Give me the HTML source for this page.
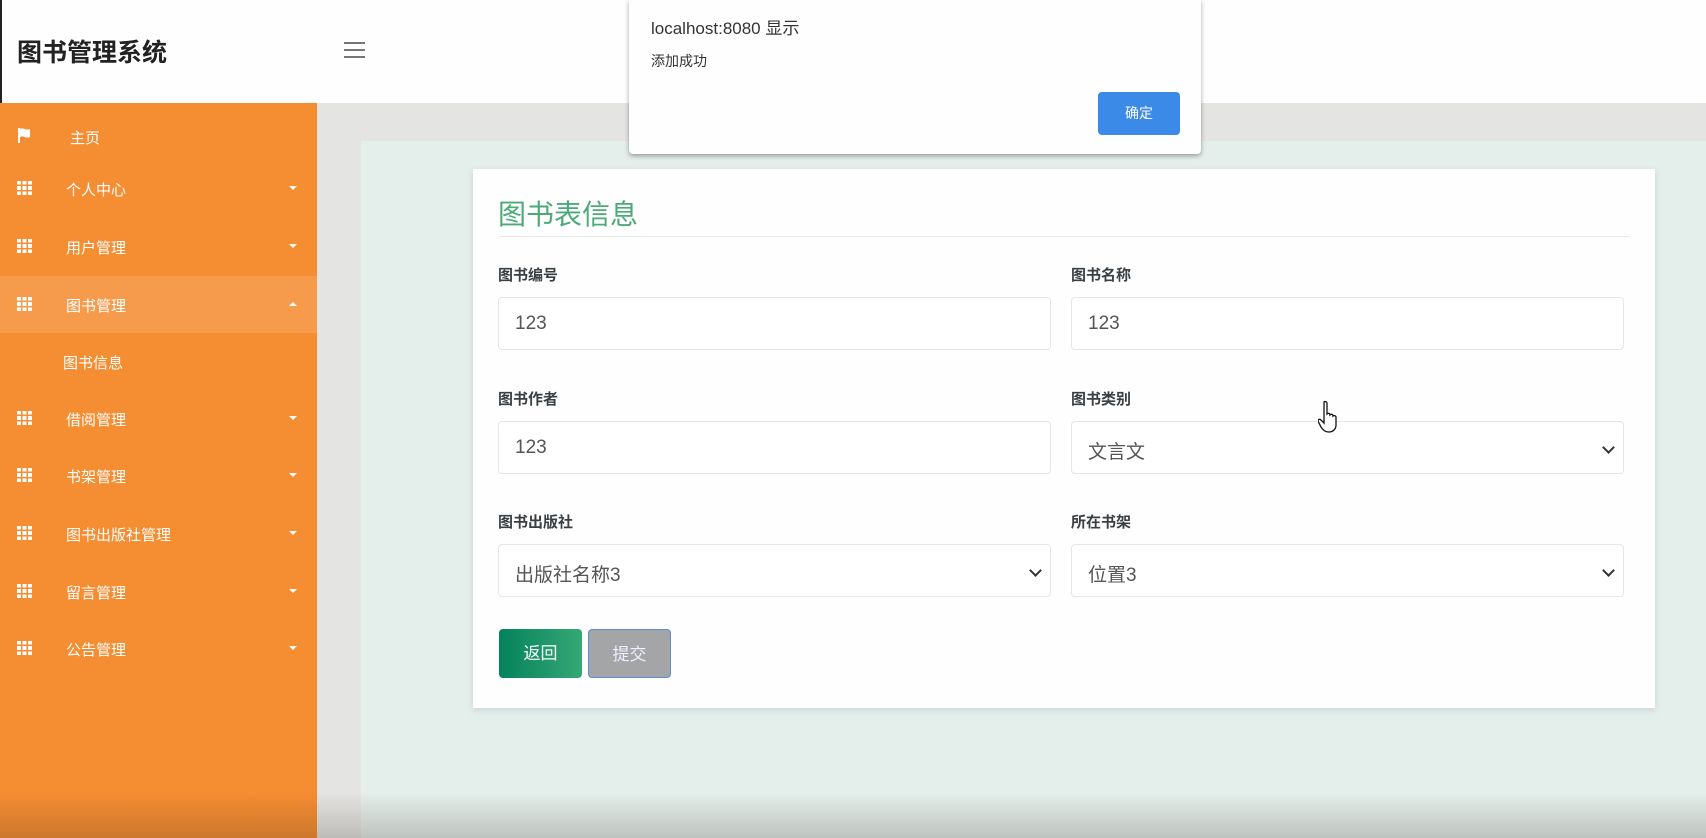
<!DOCTYPE html>
<html><head><meta charset="utf-8"><style>
*{box-sizing:border-box;margin:0;padding:0}
body{width:1706px;height:838px;overflow:hidden;position:relative;background:#e4e4e2;font-family:"Liberation Sans","Noto Sans CJK SC",sans-serif}
.hdr{position:absolute;left:0;top:0;width:1706px;height:103px;background:#fdfefd;border-left:2px solid #222}
.hdr .t{position:absolute;left:15px;top:33px;font-size:25px;font-weight:bold;color:#222}
.ham{position:absolute;left:342px;top:42px;width:21px}
.ham i{display:block;height:2px;background:#777;margin-bottom:5px}
.side{position:absolute;left:0;top:103px;width:317px;height:735px;background:#f58d32}
.it{position:absolute;left:0;width:317px;height:57px;color:#fff;font-size:15px}
.it .ic{position:absolute;left:17px;top:21px;width:15px;height:14px;
background:linear-gradient(90deg,#fff 0 4px,transparent 4px 5.5px,#fff 5.5px 9.5px,transparent 9.5px 11px,#fff 11px 15px);
-webkit-mask:linear-gradient(#000 0 3.5px,transparent 3.5px 5px,#000 5px 9px,transparent 9px 10.5px,#000 10.5px 14px);}
.it .tx{position:absolute;left:66px;top:19px}
.it .c{position:absolute;left:289px;top:26px;border-left:4px solid transparent;border-right:4px solid transparent;border-top:4px solid #fff}
.it .c.up{border-top:0;border-bottom:4px solid #fff}
.main{position:absolute;left:361px;top:141px;width:1345px;height:697px;background:#e4eeea}
.card{position:absolute;left:473px;top:169px;width:1182px;height:539px;background:#fdfefd;box-shadow:0 2px 6px rgba(150,170,190,.35)}
.ct{position:absolute;left:25px;top:24px;font-size:28px;color:#4caa78}
.ln{position:absolute;left:25px;right:25px;top:67px;height:1px;background:#e6ebe8}
.lb{position:absolute;font-size:15px;font-weight:bold;color:#3a3f44}
.in{position:absolute;width:553px;height:53px;border:1px solid #e3e7e5;border-radius:4px;background:#fff;font-size:19px;color:#555;padding:15px 0 0 16px}
.sel:after{content:"";position:absolute;right:10px;top:21px;width:7px;height:7px;border-right:2px solid #333;border-bottom:2px solid #333;transform:rotate(45deg)}
.btn{position:absolute;top:460px;height:49px;border-radius:4px;color:#fff;font-size:17px;text-align:center;line-height:49px}
.fade{position:absolute;left:0;top:792px;width:1706px;height:46px;background:linear-gradient(rgba(0,0,0,0),rgba(40,30,20,.2))}
.dlg{position:absolute;left:629px;top:0;width:572px;height:154px;background:#fdfefd;box-shadow:0 2px 5px rgba(0,0,0,.35);border-radius:0 0 4px 4px}
.dlg .a{position:absolute;left:22px;top:14px;font-size:17px;color:#333}
.dlg .b{position:absolute;left:22px;top:51px;font-size:14px;color:#333}
.dlg .ok{position:absolute;left:469px;top:92px;width:82px;height:43px;background:#3b8ae8;border-radius:4px;color:#fff;font-size:14px;text-align:center;line-height:43px}
</style></head><body>
<div class="hdr"><div class="t">图书管理系统</div><div class="ham"><i></i><i></i><i></i></div></div>
<div class="side">
<div class="it" style="top:5px"><svg style="position:absolute;left:17px;top:20px" width="14" height="15" viewBox="0 0 14 15"><path d="M1 0v15h2V9c3-2 6 2 10 0V1C9 3 6-1 3 1V0z" fill="#fff"/></svg><span class="tx" style="left:70px">主页</span></div>
<div class="it" style="top:57px"><i class="ic"></i><span class="tx">个人中心</span><i class="c"></i></div>
<div class="it" style="top:115px"><i class="ic"></i><span class="tx">用户管理</span><i class="c"></i></div>
<div class="it" style="top:173px;background:#f69b4b"><i class="ic"></i><span class="tx">图书管理</span><i class="c up"></i></div>
<div class="it" style="top:230px"><span class="tx" style="left:63px">图书信息</span></div>
<div class="it" style="top:287px"><i class="ic"></i><span class="tx">借阅管理</span><i class="c"></i></div>
<div class="it" style="top:344px"><i class="ic"></i><span class="tx">书架管理</span><i class="c"></i></div>
<div class="it" style="top:402px"><i class="ic"></i><span class="tx">图书出版社管理</span><i class="c"></i></div>
<div class="it" style="top:460px"><i class="ic"></i><span class="tx">留言管理</span><i class="c"></i></div>
<div class="it" style="top:517px"><i class="ic"></i><span class="tx">公告管理</span><i class="c"></i></div>
</div>
<div class="main"></div>
<div class="card">
<div class="ct">图书表信息</div><div class="ln"></div>
<div class="lb" style="left:25px;top:95px">图书编号</div><div class="lb" style="left:598px;top:95px">图书名称</div>
<div class="in" style="left:25px;top:128px">123</div><div class="in" style="left:598px;top:128px">123</div>
<div class="lb" style="left:25px;top:219px">图书作者</div><div class="lb" style="left:598px;top:219px">图书类别</div>
<div class="in" style="left:25px;top:252px">123</div><div class="in sel" style="left:598px;top:252px">文言文</div>
<div class="lb" style="left:25px;top:342px">图书出版社</div><div class="lb" style="left:598px;top:342px">所在书架</div>
<div class="in sel" style="left:25px;top:375px">出版社名称3</div><div class="in sel" style="left:598px;top:375px">位置3</div>
<div class="btn" style="left:26px;width:83px;background:linear-gradient(90deg,#05825c,#35a875)">返回</div>
<div class="btn" style="left:115px;width:83px;background:#a3a5a6;border:1px solid #5a8ed0;color:#eef">提交</div>
</div>
<svg style="position:absolute;left:1318px;top:400px" width="22" height="34" viewBox="0 0 22 34"><path d="M6 2c1-1 3 0 3 1v11c1-1 3-1 3 1 1-1 3-1 3 1 1-1 3 0 3 1v8c0 4-3 7-7 7s-6-2-8-5l-3-6c0-2 2-2 3-1l3 3V3z" fill="#fff" stroke="#111" stroke-width="1.3"/></svg>
<div class="fade"></div>
<div class="dlg"><div class="a">localhost:8080 显示</div><div class="b">添加成功</div><div class="ok">确定</div></div>
</body></html>
